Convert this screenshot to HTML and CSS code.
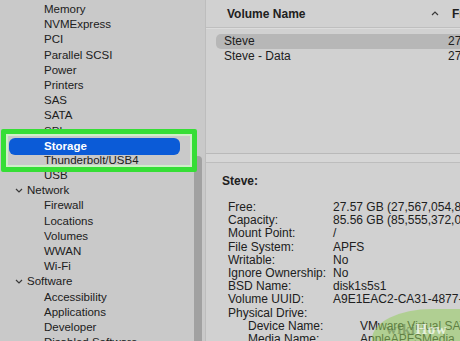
FILE: index.html
```html
<!DOCTYPE html>
<html lang="en">
<head>
    <meta charset="UTF-8">
    <meta name="viewport" content="width=device-width, initial-scale=1.0">
    <title>System Information</title>
    <link rel="stylesheet" href="styles.css">
</head>
<body>
    <div class="window">
        <aside class="sidebar">
            <ul class="tree">
                <li class="child">Memory</li>
                <li class="child">NVMExpress</li>
                <li class="child">PCI</li>
                <li class="child">Parallel SCSI</li>
                <li class="child">Power</li>
                <li class="child">Printers</li>
                <li class="child">SAS</li>
                <li class="child">SATA</li>
                <li class="child">SPI</li>
                <li class="child selected"><span class="pill">Storage</span></li>
                <li class="child">Thunderbolt/USB4</li>
                <li class="child">USB</li>
                <li class="parent">
                    <svg class="chevron" width="8" height="5" viewBox="0 0 8 5"><path d="M1 1 L4 4 L7 1" /></svg>
                    Network
                </li>
                <li class="child">Firewall</li>
                <li class="child">Locations</li>
                <li class="child">Volumes</li>
                <li class="child">WWAN</li>
                <li class="child">Wi-Fi</li>
                <li class="parent">
                    <svg class="chevron" width="8" height="5" viewBox="0 0 8 5"><path d="M1 1 L4 4 L7 1" /></svg>
                    Software
                </li>
                <li class="child">Accessibility</li>
                <li class="child">Applications</li>
                <li class="child">Developer</li>
                <li class="child">Disabled Software</li>
            </ul>
            <div class="scrollbar"><div class="thumb"></div></div>
        </aside>

        <main class="content">
            <div class="volumes">
                <div class="table-head">
                    <span class="col-name">Volume Name</span>
                    <svg class="sort" width="8" height="5" viewBox="0 0 8 5"><path d="M1 4 L4 1 L7 4" /></svg>
                    <span class="col-free">Free</span>
                </div>
                <div class="row active">
                    <span class="col-name">Steve</span>
                    <span class="col-free">27.57 GB</span>
                </div>
                <div class="row">
                    <span class="col-name">Steve - Data</span>
                    <span class="col-free">27.57 GB</span>
                </div>
            </div>

            <div class="split"></div>

            <div class="detail">
                <div class="detail-title">Steve:</div>
                <div class="props">
                    <span>Free:</span><span>27.57 GB (27,567,054,848 bytes)</span>
                    <span>Capacity:</span><span>85.56 GB (85,555,372,032 bytes)</span>
                    <span>Mount Point:</span><span>/</span>
                    <span>File System:</span><span>APFS</span>
                    <span>Writable:</span><span>No</span>
                    <span>Ignore Ownership:</span><span>No</span>
                    <span>BSD Name:</span><span>disk1s5s1</span>
                    <span>Volume UUID:</span><span>A9E1EAC2-CA31-4877-9A3C</span>
                    <span class="wide">Physical Drive:</span>
                </div>
                <div class="props nested">
                    <span>Device Name:</span><span>VMware Virtual SATA</span>
                    <span>Media Name:</span><span>AppleAPFSMedia</span>
                </div>
            </div>
        </main>

        <div class="watermark"><span class="wiki">wiki</span><span class="how">How</span></div>
    </div>
</body>
</html>
```

FILE: styles.css
```css
* {
    margin: 0;
    padding: 0;
    box-sizing: border-box;
}

body {
    width: 460px;
    height: 341px;
    overflow: hidden;
    background: #d1d1d1;
    color: #202020;
    font-family: 'Liberation Sans', Arial, sans-serif;
}

.window {
    position: relative;
    display: flex;
    width: 460px;
    height: 341px;
    overflow: hidden;
}

/* боковая панель */

.sidebar {
    display: flex;
    width: 206px;
    flex-shrink: 0;
    background: #c9c9c9;
    border-right: 1px solid #bdbdbd;
}

.tree {
    list-style: none;
    width: 194px;
    padding-top: 2px;
    font-size: 11.5px;
}

.tree li {
    position: relative;
    height: 15.2px;
    line-height: 15.2px;
    white-space: nowrap;
}

.child {
    padding-left: 44px;
}

.parent {
    display: flex;
    align-items: center;
    padding-left: 15px;
    gap: 4px;
}

.chevron path,
.sort path {
    fill: none;
    stroke: #3a3a3a;
    stroke-width: 1.2;
}

.selected {
    z-index: 2;
}

.pill {
    display: block;
    margin-left: -35px;
    width: 171px;
    height: 17px;
    line-height: 17px;
    margin-top: -1px;
    padding-left: 35px;
    background: #0b5bd7;
    color: #fff;
    font-weight: bold;
    border-radius: 6px;
}

.selected::before {
    content: '';
    position: absolute;
    left: 1px;
    top: -9px;
    width: 186px;
    height: 33px;
    border: 5px solid #36de36;
    box-shadow: inset 0 0 0 2px #cfeec9;
    border-radius: 2px;
}

.scrollbar {
    width: 11px;
    padding-top: 156px;
    padding-right: 3px;
}

.thumb {
    width: 8px;
    height: 200px;
    background: #a1a1a1;
    border-radius: 4px 4px 0 0;
}

/* правая часть */

.content {
    flex: 1;
    display: flex;
    flex-direction: column;
    min-width: 0;
    font-size: 12px;
}

.volumes {
    flex-shrink: 0;
    height: 153px;
    padding-left: 10px;
}

.table-head {
    display: flex;
    align-items: center;
    height: 28px;
    margin-left: -10px;
    padding-left: 21px;
    font-weight: bold;
    border-bottom: 1px solid #bfbfbf;
    box-shadow: 0 1px 0 #dcdcdc;
}

.col-name,
.col-free,
.sort {
    flex-shrink: 0;
    white-space: nowrap;
}

.table-head .col-name {
    width: 204px;
}

.sort {
    margin-right: 13px;
}

.table-head + .row {
    margin-top: 6px;
}

.row {
    display: flex;
    height: 15px;
    line-height: 15px;
    padding-left: 8px;
    border-radius: 5px 0 0 5px;
}

.row .col-name {
    width: 224px;
}

.row.active {
    background: #b7b7b7;
}

.split {
    flex-shrink: 0;
    height: 10px;
    border-top: 1px solid #b9b9b9;
    border-bottom: 1px solid #bdbdbd;
    background: #d6d6d6;
}

.detail {
    flex-shrink: 0;
    padding: 11px 0 0 16px;
    line-height: 13.2px;
}

.detail-title {
    font-weight: bold;
    margin-bottom: 13px;
    line-height: 14px;
}

.props {
    display: grid;
    grid-template-columns: 105px auto;
    padding-left: 6px;
    white-space: nowrap;
}

.props .wide {
    grid-column: 1 / 3;
}

.nested {
    padding-left: 26px;
    grid-template-columns: 112px auto;
}

.watermark {
    position: absolute;
    right: -8px;
    bottom: -6px;
    width: 96px;
    height: 38px;
    padding: 12px 0 0 14px;
    background: rgba(150, 205, 95, 0.55);
    border-radius: 60px 0 0 0 / 30px 0 0 0;
    font-family: 'Liberation Serif', serif;
    font-weight: bold;
    font-size: 15px;
    letter-spacing: 0.5px;
}

.wiki {
    color: rgba(90, 120, 70, 0.5);
}

.how {
    color: rgba(255, 255, 255, 0.7);
}
```
